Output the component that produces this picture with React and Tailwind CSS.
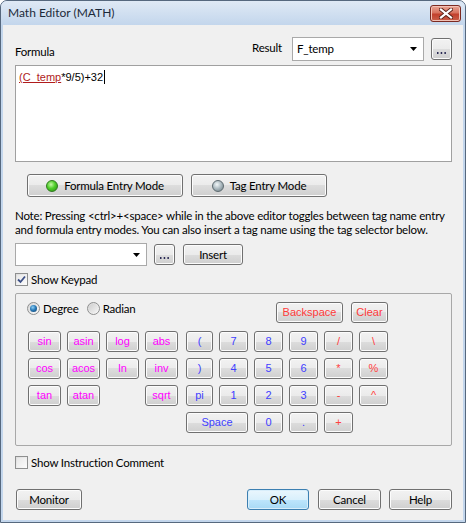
import React from "react";

const ui = "font-['Lato','Noto_Sans',sans-serif] text-[11.5px] tracking-[-0.2px] text-black";
const keyFont = "font-['Liberation_Sans',Arial,sans-serif] text-[11px] tracking-normal";
const btn =
  "border border-[#707070] rounded-[3px] bg-[linear-gradient(180deg,#f2f2f2_0%,#ebebeb_50%,#dddddd_50%,#cfcfcf_100%)] shadow-[inset_0_0_0_1px_#fcfcfc] flex items-center justify-center leading-none";

function Key({ label, color, w = "w-[33px]" }) {
  return (
    <div className={`${btn} ${keyFont} ${color} ${w} h-[21px]`}>{label}</div>
  );
}

function Arrow() {
  return (
    <svg width="7" height="4" viewBox="0 0 7 4">
      <path d="M0 0H7L3.5 4Z" fill="#000" />
    </svg>
  );
}

function Dots({ cls }) {
  return (
    <div className={`${btn} ${cls} items-end pb-[5px]`}>
      <svg width="9" height="2" viewBox="0 0 9 2">
        <rect x="0" y="0" width="1.5" height="2" fill="#2a2a55" />
        <rect x="3.7" y="0" width="1.5" height="2" fill="#2a2a55" />
        <rect x="7.4" y="0" width="1.5" height="2" fill="#2a2a55" />
      </svg>
    </div>
  );
}

function Checkbox({ checked }) {
  return (
    <div className="w-[13px] h-[13px] border border-[#8e8f8f] bg-[linear-gradient(135deg,#dcdcdc,#fefefe)] flex items-center justify-center shrink-0">
      <div className="w-[9px] h-[9px] bg-[linear-gradient(135deg,#e8e8e8,#fafafa)] flex items-center justify-center">
        {checked && (
          <svg width="9" height="9" viewBox="0 0 9 9">
            <path d="M1 4.5L3.5 7L8 1.5" stroke="#3c4f86" strokeWidth="1.8" fill="none" />
          </svg>
        )}
      </div>
    </div>
  );
}

function Radio({ checked }) {
  return (
    <div className="w-[13px] h-[13px] rounded-full border border-[#8e8f8f] bg-[linear-gradient(135deg,#d6d6d6,#fafafa)] flex items-center justify-center shrink-0">
      {checked ? (
        <div className="w-[7px] h-[7px] rounded-full bg-[radial-gradient(circle_at_40%_35%,#8fd0f5_0%,#2a7ab8_45%,#0d3c66_100%)]" />
      ) : (
        <div className="w-[9px] h-[9px] rounded-full bg-[linear-gradient(135deg,#cfcfcf,#f4f4f4)]" />
      )}
    </div>
  );
}

function Led({ on }) {
  return on ? (
    <div className="w-[12px] h-[12px] rounded-full border border-[#2f7a1e] bg-[radial-gradient(circle_at_40%_35%,#c8f7a8_0%,#4fcf2a_45%,#2a8c14_100%)] shrink-0" />
  ) : (
    <div className="w-[12px] h-[12px] rounded-full border border-[#5d6a70] bg-[radial-gradient(circle_at_40%_35%,#f2f7f9_0%,#a9b7bd_50%,#6b7a80_100%)] shrink-0" />
  );
}

export default function App() {
  return (
    <div className="w-[466px] h-[523px] bg-white">
      <div className="w-full h-full flex flex-col rounded-t-[7px] border border-[#56687e] bg-[#c3d6ec] overflow-hidden">
        {/* Title bar */}
        <div className="h-[24px] flex items-start bg-[linear-gradient(180deg,#dfe9f5,#c3d6ec)] shrink-0">
          <div className="font-['Lato','Noto_Sans',sans-serif] text-[12px] text-[#1c2a3a] pl-[7px] pt-[4px] leading-[16px] flex-1">Math Editor (MATH)</div>
          <div className="mt-[4px] mr-[4px] w-[31px] h-[17px] rounded-[3px] border border-[#7b2a22] bg-[linear-gradient(180deg,#e9a595_0%,#d8735f_45%,#c2402d_55%,#c9604a_100%)] shadow-[inset_0_0_0_1px_#f2c2b6] flex items-center justify-center">
            <svg width="14" height="11" viewBox="0 0 14 11">
              <path d="M2 1.5L12 9.5M12 1.5L2 9.5" stroke="#5a2218" strokeWidth="4" strokeLinecap="square" />
              <path d="M2 1.5L12 9.5M12 1.5L2 9.5" stroke="#fff" strokeWidth="2.2" strokeLinecap="square" />
            </svg>
          </div>
        </div>

        {/* Content */}
        <div className={`${ui} flex-1 mx-[2px] mb-[2px] bg-[#f0f0f0] flex flex-col pl-[12px] pr-[11px] pt-[12px]`}>
          {/* Result row */}
          <div className="flex justify-between items-start h-[24px]">
            <div className="mt-[7px] leading-[16px]">Formula</div>
            <div className="flex items-center h-[24px]">
              <div className="leading-[16px] mr-[10px] mt-[-2px]">Result</div>
              <div className="w-[132px] h-[24px] bg-white border border-[#a9a9a9] flex items-center justify-between pl-[4px] pr-[6px]">
                <span className="leading-[16px]">F_temp</span>
                <Arrow />
              </div>
              <Dots cls="ml-[7px] w-[21px] h-[22px]" />
            </div>
          </div>

          {/* Formula editor */}
          <div className="mt-[4px] h-[97px] bg-white border border-[#a0a0a0] pl-[3px] pt-[4px]">
            <div className={`${keyFont} flex items-center leading-[14px]`}>
              <span className="text-[#b01c1c] underline decoration-[#b01c1c]">(C_temp</span>
              <span className="text-black">*9/5)+32</span>
              <span className="w-[1px] h-[14px] bg-black ml-[1px]" />
            </div>
          </div>

          {/* Mode buttons */}
          <div className="mt-[12px] flex gap-[8px] pl-[12px]">
            <div className={`${btn} w-[156px] h-[23px] gap-[6px]`}>
              <Led on />
              <span className="leading-[16px]">Formula Entry Mode</span>
            </div>
            <div className={`${btn} w-[136px] h-[23px] gap-[6px]`}>
              <Led />
              <span className="leading-[16px]">Tag Entry Mode</span>
            </div>
          </div>

          {/* Note */}
          <div className="mt-[12px] leading-[14px] whitespace-nowrap">
            <div>Note: Pressing &lt;ctrl&gt;+&lt;space&gt; while in the above editor toggles between tag name entry</div>
            <div>and formula entry modes. You can also insert a tag name using the tag selector below.</div>
          </div>

          {/* Tag row */}
          <div className="mt-[6px] flex items-center h-[23px]">
            <div className="w-[132px] h-[23px] bg-white border border-[#a9a9a9] flex items-center justify-end pr-[6px]">
              <Arrow />
            </div>
            <Dots cls="ml-[7px] w-[21px] h-[21px]" />
            <div className={`${btn} ml-[8px] w-[60px] h-[21px]`}>
              <span className="leading-[16px]">Insert</span>
            </div>
          </div>

          {/* Show Keypad */}
          <div className="mt-[7px] flex items-center gap-[3px] h-[13px]">
            <Checkbox checked />
            <span className="leading-[16px]">Show Keypad</span>
          </div>

          {/* Keypad group */}
          <div className="mt-[7px] h-[153px] border border-[#a8a8a8] rounded-[2px] pl-[11px] pt-[8px]">
            <div className="flex items-start h-[21px]">
              <div className="w-[249px] flex items-center h-[13px]">
                <Radio checked />
                <span className="ml-[3px] leading-[16px]">Degree</span>
                <span className="ml-[8px]"><Radio /></span>
                <span className="ml-[3px] leading-[16px]">Radian</span>
              </div>
              <Key label="Backspace" color="text-[#ff3a3a]" w="w-[67px]" />
              <div className="ml-[8px]">
                <Key label="Clear" color="text-[#ff3a3a]" w="w-[37px]" />
              </div>
            </div>

            <div className="mt-[8px] ml-[1px] flex gap-[8px]">
              <div className="grid grid-cols-[repeat(4,33px)] grid-rows-[repeat(4,21px)] gap-[6px]">
                <Key label="sin" color="text-[#ff00ff]" />
                <Key label="asin" color="text-[#ff00ff]" />
                <Key label="log" color="text-[#ff00ff]" />
                <Key label="abs" color="text-[#ff00ff]" />
                <Key label="cos" color="text-[#ff00ff]" />
                <Key label="acos" color="text-[#ff00ff]" />
                <Key label="ln" color="text-[#ff00ff]" />
                <Key label="inv" color="text-[#ff00ff]" />
                <Key label="tan" color="text-[#ff00ff]" />
                <Key label="atan" color="text-[#ff00ff]" />
                <div />
                <Key label="sqrt" color="text-[#ff00ff]" />
              </div>
              <div className="grid grid-cols-[27px_repeat(5,29px)] grid-rows-[repeat(4,21px)] gap-[6px]">
                <Key label="(" color="text-[#4040ff]" w="w-[27px]" />
                <Key label="7" color="text-[#4040ff]" w="w-[29px]" />
                <Key label="8" color="text-[#4040ff]" w="w-[29px]" />
                <Key label="9" color="text-[#4040ff]" w="w-[29px]" />
                <Key label="/" color="text-[#ff4040]" w="w-[29px]" />
                <Key label="\" color="text-[#ff4040]" w="w-[29px]" />
                <Key label=")" color="text-[#4040ff]" w="w-[27px]" />
                <Key label="4" color="text-[#4040ff]" w="w-[29px]" />
                <Key label="5" color="text-[#4040ff]" w="w-[29px]" />
                <Key label="6" color="text-[#4040ff]" w="w-[29px]" />
                <Key label="*" color="text-[#ff4040]" w="w-[29px]" />
                <Key label="%" color="text-[#ff4040]" w="w-[29px]" />
                <Key label="pi" color="text-[#4040ff]" w="w-[27px]" />
                <Key label="1" color="text-[#4040ff]" w="w-[29px]" />
                <Key label="2" color="text-[#4040ff]" w="w-[29px]" />
                <Key label="3" color="text-[#4040ff]" w="w-[29px]" />
                <Key label="-" color="text-[#ff4040]" w="w-[29px]" />
                <Key label="^" color="text-[#ff4040]" w="w-[29px]" />
                <div className="col-span-2">
                  <Key label="Space" color="text-[#4040ff]" w="w-[62px]" />
                </div>
                <Key label="0" color="text-[#4040ff]" w="w-[29px]" />
                <Key label="." color="text-[#4040ff]" w="w-[29px]" />
                <Key label="+" color="text-[#ff4040]" w="w-[29px]" />
              </div>
            </div>
          </div>

          {/* Show Instruction Comment */}
          <div className="mt-[10px] flex items-center gap-[3px] h-[13px]">
            <Checkbox />
            <span className="leading-[16px]">Show Instruction Comment</span>
          </div>

          {/* Bottom buttons */}
          <div className="mt-[20px] flex items-center h-[21px]">
            <div className={`${btn} ml-[1px] w-[66px] h-[21px]`}>
              <span className="leading-[16px]">Monitor</span>
            </div>
            <div className="flex-1" />
            <div className="w-[62px] h-[21px] rounded-[3px] border border-[#3c7fb1] bg-[linear-gradient(180deg,#eaf6fd_0%,#d9f0fc_50%,#bee6fd_50%,#a7d9f5_100%)] shadow-[inset_0_0_0_1px_#d8eefb] flex items-center justify-center">
              <span className="leading-[16px]">OK</span>
            </div>
            <div className={`${btn} ml-[9px] w-[63px] h-[21px]`}>
              <span className="leading-[16px]">Cancel</span>
            </div>
            <div className={`${btn} ml-[8px] w-[63px] h-[21px]`}>
              <span className="leading-[16px]">Help</span>
            </div>
          </div>
        </div>
      </div>
    </div>
  );
}
